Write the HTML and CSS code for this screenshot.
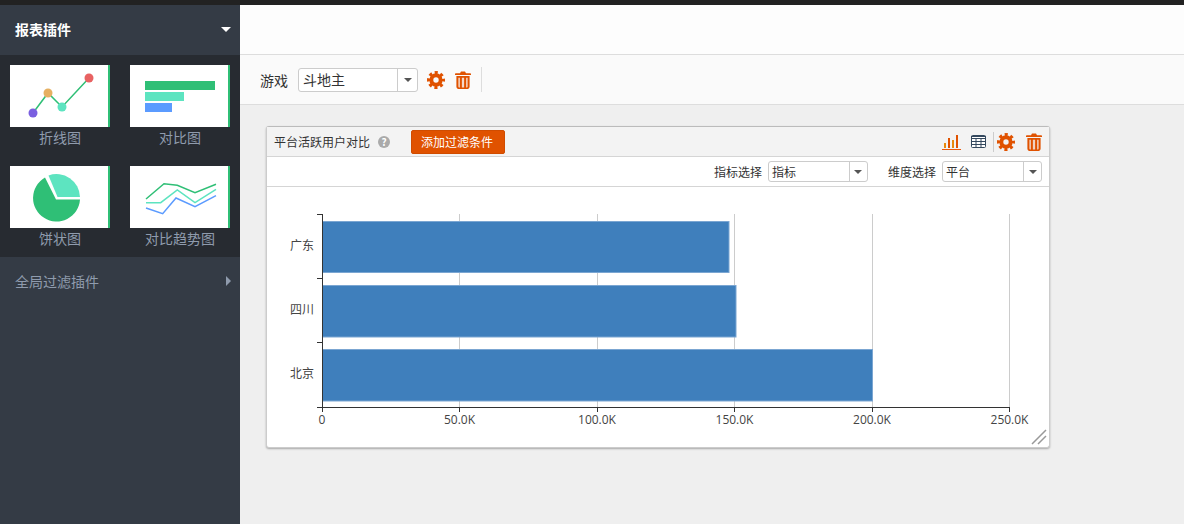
FILE: index.html
```html
<!DOCTYPE html>
<html lang="en">
<head>
    <meta charset="UTF-8">
    <title>报表</title>
    <link rel="stylesheet" href="styles.css">
</head>

<body>
    <svg class="defs" width="0" height="0">
        <symbol id="gear" viewBox="0 0 20 20">
            <circle cx="10" cy="10" r="8" fill="none" stroke="currentColor" stroke-width="4" stroke-dasharray="3.300 2.983" stroke-dashoffset="1.650"/>
            <circle cx="10" cy="10" r="5.200" fill="none" stroke="currentColor" stroke-width="4.400"/>
        </symbol>
        <symbol id="trash" viewBox="0 0 16 18">
            <path fill="currentColor" fill-rule="evenodd" d="M5 2.200 6 .4h4l1 1.800h4.200c.5 0 .8.3.8.8v1.100H0V3c0-.5.3-.8.8-.8H5zM1.400 5h13.200v10.800c0 1.200-.9 2.200-2 2.200H3.400c-1.100 0-2-1-2-2.200V5zM3.500 6.800v8.700c0 .6.3.9.7.9h.5V6.800H3.500zM6.900 6.800v9.600h.9V6.800h-.9zM8.200 6.800v9.600h.9V6.800h-.9zM11.300 6.800v9.600h.5c.4 0 .7-.3.7-.9V6.800h-1.200z"/>
        </symbol>
    </svg>

    <div class="topline"></div>
    <div class="page">
        <div class="sidebar">
            <div class="side-head">
                <span>报表插件</span>
                <i class="arrow-down"></i>
            </div>
            <div class="plugins">
                <div class="plugin">
                    <svg class="thumb" viewBox="0 0 98 62">
                        <polyline points="23,48 38,28 52,42 79,13" fill="none" stroke="#2fbf76" stroke-width="1.500"/>
                        <circle cx="23" cy="48" r="4.500" fill="#7a5fe0"/>
                        <circle cx="38" cy="28" r="4.500" fill="#e6b062"/>
                        <circle cx="52" cy="42" r="4.500" fill="#5de4c0"/>
                        <circle cx="79" cy="13" r="4.500" fill="#e86262"/>
                    </svg>
                    <div class="plugin-name">折线图</div>
                </div>
                <div class="plugin">
                    <svg class="thumb" viewBox="0 0 98 62">
                        <rect x="15" y="16" width="70" height="9" fill="#2fbf76"/>
                        <rect x="15" y="27" width="39" height="9" fill="#5de4c0"/>
                        <rect x="15" y="38" width="27" height="9" fill="#5b9bff"/>
                    </svg>
                    <div class="plugin-name">对比图</div>
                </div>
                <div class="plugin">
                    <svg class="thumb" viewBox="0 0 98 62">
                        <path d="M46 33.500 L70 33.500 A23.500 23.500 0 1 1 35 11.500 Z" fill="#2fbf76"/>
                        <path d="M47.500 31 L70 31 A23.500 23.500 0 0 0 38.500 9.500 Z" fill="#5de4c0"/>
                    </svg>
                    <div class="plugin-name">饼状图</div>
                </div>
                <div class="plugin">
                    <svg class="thumb" viewBox="0 0 98 62" fill="none" stroke-width="1.500">
                        <polyline points="16,33 34,17.700 47.300,19.300 65,26.700 86,18.300" stroke="#2fbf76"/>
                        <polyline points="16,36.700 30.700,36.700 47.300,24 65,36.700 86,23.300" stroke="#5de4c0"/>
                        <polyline points="16,42 32.700,47.700 46,32 65,40.700 86,29.700" stroke="#5b9bff"/>
                    </svg>
                    <div class="plugin-name">对比趋势图</div>
                </div>
            </div>
            <div class="side-row">
                <span>全局过滤插件</span>
                <i class="arrow-right"></i>
            </div>
        </div>

        <div class="main">
            <div class="blank-bar"></div>
            <div class="toolbar">
                <span class="tool-label">游戏</span>
                <div class="select select-lg">
                    <span class="select-text">斗地主</span>
                    <span class="select-btn"><i class="caret"></i></span>
                </div>
                <svg class="icon-gear"><use href="#gear"/></svg>
                <svg class="icon-trash"><use href="#trash"/></svg>
                <span class="tool-sep"></span>
            </div>

            <div class="content">
                <div class="panel">
                    <div class="panel-head">
                        <span class="panel-title">平台活跃用户对比</span>
                        <span class="help">?</span>
                        <a class="add-btn" href="#">添加过滤条件</a>
                        <div class="panel-tools">
                            <svg class="icon-bars" viewBox="0 0 19 16">
                                <path d="M0 15.500h19" stroke="#e8590c" stroke-width="1" fill="none"/>
                                <g fill="#e8890c">
                                    <rect x="2" y="9" width="2" height="5"/>
                                    <rect x="10" y="6" width="2" height="8"/>
                                </g>
                                <g fill="#e05200">
                                    <rect x="6" y="4" width="2" height="10"/>
                                    <rect x="14" y="1" width="2" height="13"/>
                                </g>
                            </svg>
                            <svg class="icon-table" viewBox="0 0 15 13">
                                <rect x=".5" y=".5" width="14" height="12" rx="1" fill="#fff" stroke="#34495e"/>
                                <path d="M0 1.500h15v2H0zM.5 6.500h14M.5 9.500h14M5 3v9.500M10 3v9.500" fill="none" stroke="#34495e"/>
                            </svg>
                            <span class="panel-sep"></span>
                            <svg class="icon-gear panel-gear"><use href="#gear"/></svg>
                            <svg class="icon-trash panel-trash"><use href="#trash"/></svg>
                        </div>
                    </div>
                    <div class="panel-filter">
                        <span class="filter-label">指标选择</span>
                        <div class="select select-sm">
                            <span class="select-text">指标</span>
                            <span class="select-btn"><i class="caret"></i></span>
                        </div>
                        <span class="filter-label second">维度选择</span>
                        <div class="select select-sm">
                            <span class="select-text">平台</span>
                            <span class="select-btn"><i class="caret"></i></span>
                        </div>
                    </div>
                    <svg class="chart" viewBox="267 187 782 260">
                        <g stroke="#ccc" stroke-width="1">
                            <path d="M459.500 214v193M597.500 214v193M734.500 214v193M872.500 214v193M1009.500 214v193"/>
                        </g>
                        <g fill="#3f7fbc" stroke="#7ba6d2" stroke-width="1">
                            <rect x="322.500" y="221.500" width="406.500" height="51"/>
                            <rect x="322.500" y="285.500" width="413.500" height="51.500"/>
                            <rect x="322.500" y="349.500" width="550" height="51.500"/>
                        </g>
                        <path d="M322.500 214v193.500M317 214.500h5M317 278.500h5M317 342.500h5M317 407.500h692.500M322.500 407v5M459.500 407v5M597.500 407v5M734.500 407v5M872.500 407v5M1009.500 407v5" fill="none" stroke="#333" stroke-width="1"/>
                        <g class="axis-text" text-anchor="end">
                            <text x="314" y="250">广东</text>
                            <text x="314" y="314">四川</text>
                            <text x="314" y="378">北京</text>
                        </g>
                        <g class="axis-text" text-anchor="middle">
                            <text x="322" y="424">0</text>
                            <text x="459.500" y="424">50.0K</text>
                            <text x="597" y="424">100.0K</text>
                            <text x="734.500" y="424">150.0K</text>
                            <text x="872" y="424">200.0K</text>
                            <text x="1009.500" y="424">250.0K</text>
                        </g>
                    </svg>
                    <svg class="resizer" viewBox="0 0 16 16">
                        <path d="M1 15 15 1M7 15l8-8" stroke="#999" stroke-width="1.500" fill="none"/>
                    </svg>
                </div>
            </div>
        </div>
    </div>
</body>

</html>
```

FILE: styles.css
```css
* {
    margin: 0;
    padding: 0;
    box-sizing: border-box;
}

html, body {
    height: 100%;
    overflow: hidden;
}

body {
    display: flex;
    flex-direction: column;
    font-family: "Noto Sans CJK SC", "Liberation Sans", sans-serif;
    font-size: 12px;
    color: #333;
    background-color: #efefef;
}

.defs {
    position: absolute;
}

.topline {
    height: 5px;
    background-color: #222;
    flex: none;
}

.page {
    flex: 1;
    display: flex;
    min-height: 0;
}

/* 左侧 */
.sidebar {
    width: 240px;
    flex: none;
    background-color: #343b45;
}

.side-head {
    height: 50px;
    padding: 0 9px 2px 15px;
    display: flex;
    align-items: center;
    justify-content: space-between;
    font-size: 14px;
    font-weight: bold;
    color: #fff;
}

.arrow-down {
    border-left: 5px solid transparent;
    border-right: 5px solid transparent;
    border-top: 5px solid #fff;
}

.plugins {
    height: 202px;
    padding: 10px 10px 0;
    display: grid;
    grid-template-columns: 100px 100px;
    grid-template-rows: 101px 91px;
    column-gap: 20px;
    background-color: #272b31;
}

.thumb {
    display: block;
    box-sizing: content-box;
    width: 98px;
    height: 62px;
    background-color: #fff;
    border-right: 2px solid #2fbf76;
}

.plugin-name {
    text-align: center;
    font-size: 14px;
    line-height: 20px;
    color: #8f9bad;
}

.side-row {
    height: 50px;
    padding: 0 9px 2px 15px;
    display: flex;
    align-items: center;
    justify-content: space-between;
    font-size: 14px;
    color: #8f9bad;
}

.arrow-right {
    border-top: 5px solid transparent;
    border-bottom: 5px solid transparent;
    border-left: 5px solid #8f9bad;
}

/* 右侧 */
.main {
    flex: 1;
    min-width: 0;
    display: flex;
    flex-direction: column;
}

.blank-bar {
    height: 50px;
    background-color: #fdfdfd;
    border-bottom: 1px solid #ddd;
}

.toolbar {
    height: 50px;
    padding-left: 20px;
    display: flex;
    align-items: center;
    background-color: #fafafa;
    border-bottom: 1px solid #ddd;
}

.tool-label {
    font-size: 14px;
    color: #333;
    margin-right: 10px;
}

.select {
    display: flex;
    background-color: #fff;
    border: 1px solid #ccc;
    border-radius: 3px;
}

.select-lg {
    width: 120px;
    height: 24px;
    font-size: 14px;
}

.select-sm {
    width: 100px;
    height: 21px;
    font-size: 12px;
}

.select-text {
    flex: 1;
    padding-left: 4px;
    color: #333;
}

.select-sm .select-text {
    padding-left: 3px;
    line-height: 19px;
}

.select-lg .select-text {
    line-height: 20px;
}

.select-btn {
    width: 20px;
    display: flex;
    align-items: center;
    justify-content: center;
    border-left: 1px solid #ccc;
}

.select-sm .select-btn {
    width: 18px;
}

.caret {
    border-left: 4px solid transparent;
    border-right: 4px solid transparent;
    border-top: 4px solid #555;
}

.icon-gear {
    width: 18px;
    height: 18px;
    color: #e05200;
}

.icon-trash {
    width: 16px;
    height: 18px;
    color: #e05200;
}

.toolbar .icon-gear {
    margin-left: 9px;
}

.toolbar .icon-trash {
    margin-left: 10px;
}

.tool-sep {
    width: 1px;
    height: 25px;
    margin-left: 10px;
    background-color: #ddd;
}

.content {
    flex: 1;
    padding: 21px 0 0 26px;
}

.panel {
    position: relative;
    width: 784px;
    height: 322px;
    background-color: #fff;
    border: 1px solid #ccc;
    border-top-color: #bbb;
    border-radius: 3px;
    box-shadow: 0 1px 2px rgba(0, 0, 0, .3);
}

.panel-head {
    height: 30px;
    padding: 0 7px;
    display: flex;
    align-items: center;
    background-color: #f3f3f3;
    border-bottom: 1px solid #d5d5d5;
}

.panel-title {
    color: #333;
}

.help {
    width: 12px;
    height: 12px;
    margin-left: 8px;
    border-radius: 50%;
    background-color: #aaa;
    color: #fff;
    font-size: 10px;
    font-weight: bold;
    line-height: 12px;
    text-align: center;
}

.add-btn {
    width: 94px;
    height: 24px;
    margin-left: 21px;
    padding-right: 2px;
    background-color: #e05200;
    border: 1px solid #d04c00;
    border-radius: 2px;
    color: #fff;
    line-height: 21px;
    text-align: center;
    text-decoration: none;
}

.panel-tools {
    margin-left: auto;
    display: flex;
    align-items: center;
}

.icon-bars {
    width: 19px;
    height: 16px;
}

.icon-table {
    width: 15px;
    height: 13px;
    margin-left: 10px;
}

.panel-sep {
    width: 1px;
    height: 20px;
    margin: 0 3px 0 7px;
    background-color: #ccc;
}

.panel-trash {
    margin-left: 11px;
}

.panel-filter {
    height: 30px;
    padding-right: 7px;
    display: flex;
    align-items: center;
    justify-content: flex-end;
    border-bottom: 1px solid #d5d5d5;
}

.filter-label {
    color: #333;
    margin-right: 6px;
}

.filter-label.second {
    margin-left: 20px;
}

.chart {
    display: block;
    width: 782px;
    height: 260px;
}

.axis-text text {
    font-family: "Open Sans", "Noto Sans CJK SC", sans-serif;
    font-size: 12px;
    fill: #444;
}

.resizer {
    position: absolute;
    right: 2px;
    bottom: 2px;
    width: 16px;
    height: 16px;
}
```
